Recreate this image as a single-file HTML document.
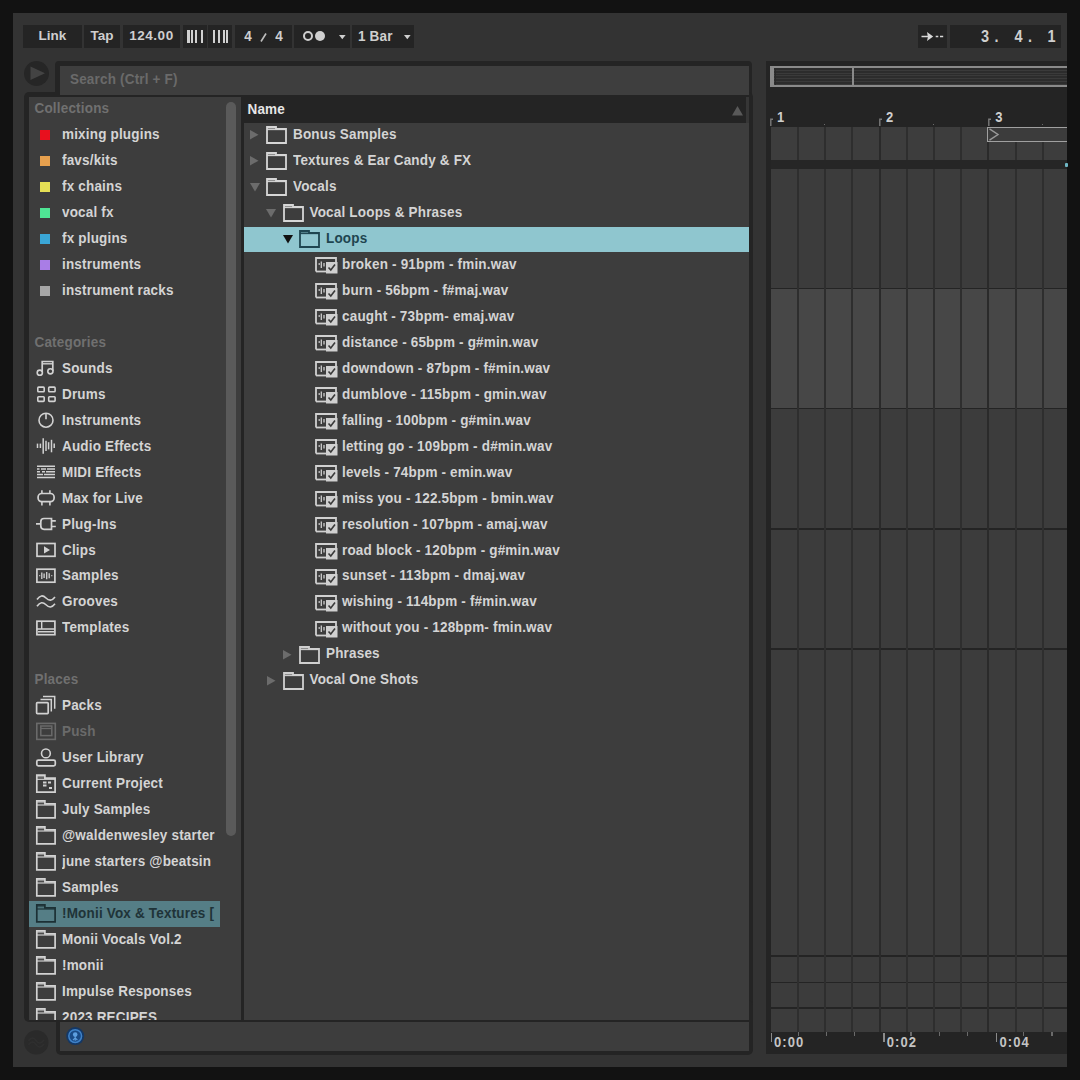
<!DOCTYPE html><html><head><meta charset="utf-8"><style>
*{margin:0;padding:0;box-sizing:border-box}
html,body{width:1080px;height:1080px;overflow:hidden;background:#121212}
body{position:relative;font-family:"Liberation Sans", sans-serif;font-weight:bold;font-size:13.5px;color:#d4d4d4}
.a{position:absolute}
.t{position:absolute;white-space:nowrap;line-height:26px;height:26px;letter-spacing:0.18px;margin-top:-0.5px;transform:scaleY(1.08);transform-origin:0 17.7px}
.btn{position:absolute;top:25px;height:23px;background:#242424;color:#cfcfcf;line-height:22px;text-align:center;font-size:13.5px}
svg{position:absolute;overflow:visible}
</style></head><body>
<div class="a" style="left:13px;top:13px;width:1054px;height:1054px;background:#333333"></div>

<div class="btn" style="left:23px;width:59px">Link</div>
<div class="btn" style="left:84px;width:36px">Tap</div>
<div class="btn" style="left:123px;width:57px"><span style="letter-spacing:0.5px">124.00</span></div>
<div class="btn" style="left:183px;width:24px"></div>
<div class="btn" style="left:208px;width:24px"></div>
<div class="btn" style="left:235px;width:57px"></div>
<div class="btn" style="left:294px;width:56px"></div>
<div class="btn" style="left:352px;width:62px"></div>
<div class="btn" style="left:918px;width:29px"></div>
<div class="btn" style="left:950px;width:111px"></div>
<div class="a" style="left:187px;top:30px;width:2.6px;height:13px;background:#d0d0d0"></div>
<div class="a" style="left:190.6px;top:30px;width:2.4px;height:13px;background:#d0d0d0"></div>
<div class="a" style="left:195.1px;top:30px;width:2px;height:13px;background:#d0d0d0"></div>
<div class="a" style="left:200.6px;top:30px;width:2.1px;height:13px;background:#d0d0d0"></div>
<div class="a" style="left:213px;top:30px;width:2.1px;height:13px;background:#d0d0d0"></div>
<div class="a" style="left:218.3px;top:30px;width:1.9px;height:13px;background:#d0d0d0"></div>
<div class="a" style="left:222.5px;top:30px;width:2px;height:13px;background:#d0d0d0"></div>
<div class="a" style="left:225.6px;top:30px;width:2.6px;height:13px;background:#d0d0d0"></div>
<div class="t" style="left:244.3px;top:24px;color:#cfcfcf">4</div>
<svg style="left:260px;top:33px" width="7" height="9"><path d="M1,8.5L6,0.5" stroke="#bdbdbd" stroke-width="1.6"/></svg>
<div class="t" style="left:275.2px;top:24px;color:#cfcfcf">4</div>
<div class="a" style="left:303px;top:31.2px;width:10.2px;height:10.2px;border:2px solid #cfcfcf;border-radius:50%"></div>
<div class="a" style="left:315.3px;top:31.2px;width:10.2px;height:10.2px;background:#d0d0d0;border-radius:50%"></div>
<svg style="left:339.4px;top:34.5px" width="7" height="5"><path d="M0,0H6.6L3.3,4.2Z" fill="#cfcfcf"/></svg>
<div class="t" style="left:358px;top:24px;line-height:26px;color:#cfcfcf">1 Bar</div>
<svg style="left:404px;top:34.5px" width="7" height="5"><path d="M0,0H6.6L3.3,4.2Z" fill="#cfcfcf"/></svg>
<svg style="left:0;top:0" width="1080" height="60"><path d="M921.5,36.5H928.5M935.7,36.5H938.3M940,36.5H943.2" stroke="#d8d8d8" stroke-width="1.6"/><path d="M927,32L933.2,36.5L927,41Q928.6,36.5 927,32Z" fill="#d8d8d8"/></svg>
<div class="t" style="left:981px;top:24px;font-size:14.5px;color:#cfcfcf">3</div>
<div class="t" style="left:994.5px;top:24px;font-size:14.5px;color:#cfcfcf">.</div>
<div class="t" style="left:1014.5px;top:24px;font-size:14.5px;color:#cfcfcf">4</div>
<div class="t" style="left:1028px;top:24px;font-size:14.5px;color:#cfcfcf">.</div>
<div class="t" style="left:1047.5px;top:24px;font-size:14.5px;color:#cfcfcf">1</div>
<div class="a" style="left:24px;top:60.5px;width:25px;height:25px;border-radius:50%;background:#262626"></div>
<svg style="left:30px;top:66px" width="16" height="15"><path d="M0.5,0.5L15,7.2L0.5,14Z" fill="#434343"/></svg>
<div class="a" style="left:55px;top:60.5px;width:697px;height:36px;background:#242424;border-radius:4px"></div>
<div class="a" style="left:24px;top:92px;width:729px;height:930px;background:#242424;border-radius:5px"></div>
<div class="a" style="left:55.5px;top:1000px;width:697.5px;height:55px;background:#242424;border-radius:5px"></div>
<div class="a" style="left:59.5px;top:65.5px;width:689.5px;height:29px;background:#3e3e3e"></div>
<div class="t" style="left:70px;top:67px;color:#6a6a6a">Search (Ctrl + F)</div>
<div class="a" style="left:28.5px;top:97px;width:212px;height:922.5px;background:#3d3d3d"></div>
<div class="a" style="left:225.5px;top:102px;width:10px;height:734px;background:#5a5a5a;border-radius:5px"></div>
<div class="a" style="left:243.5px;top:97px;width:505.5px;height:25.5px;background:#242424"></div>
<div class="a" style="left:746px;top:97px;width:3px;height:25.5px;background:#363636"></div>
<div class="a" style="left:243.5px;top:122.5px;width:505.5px;height:897px;background:#3d3d3d"></div>
<div class="a" style="left:60px;top:1022px;width:689px;height:28.5px;background:#3d3d3d"></div>
<div class="t" style="left:247.5px;top:97px;line-height:25px;color:#e6e6e6">Name</div>
<svg style="left:732px;top:105.5px" width="11" height="10"><path d="M5.5,0L11,9.5H0Z" fill="#595959"/></svg>
<div class="a" style="left:243.5px;top:226.5px;width:505.5px;height:25px;background:#8fc6cf"></div>
<svg style="left:250.0px;top:130.2px" width="9" height="10"><path d="M0,0L8.5,4.7L0,9.4Z" fill="#6c6c6c"/></svg>
<svg style="left:266.0px;top:126.0px" width="21" height="18"><rect x="1" y="1" width="9" height="2.5" fill="#d6d6d6" opacity="0.55"/><path d="M1,17V1H10V3H20V17Z" fill="none" stroke="#d6d6d6" stroke-width="1.8" stroke-linejoin="miter"/><path d="M1,3.6H20" stroke="#d6d6d6" stroke-width="1.1"/></svg>
<div class="t" style="left:293.0px;top:122.50px;color:#d4d4d4">Bonus Samples</div>
<svg style="left:250.0px;top:156.2px" width="9" height="10"><path d="M0,0L8.5,4.7L0,9.4Z" fill="#6c6c6c"/></svg>
<svg style="left:266.0px;top:152.0px" width="21" height="18"><rect x="1" y="1" width="9" height="2.5" fill="#d6d6d6" opacity="0.55"/><path d="M1,17V1H10V3H20V17Z" fill="none" stroke="#d6d6d6" stroke-width="1.8" stroke-linejoin="miter"/><path d="M1,3.6H20" stroke="#d6d6d6" stroke-width="1.1"/></svg>
<div class="t" style="left:293.0px;top:148.47px;color:#d4d4d4">Textures &amp; Ear Candy &amp; FX</div>
<svg style="left:249.5px;top:182.7px" width="10" height="9"><path d="M0,0H10L5,8.5Z" fill="#6c6c6c"/></svg>
<svg style="left:266.0px;top:178.0px" width="21" height="18"><rect x="1" y="1" width="9" height="2.5" fill="#d6d6d6" opacity="0.55"/><path d="M1,17V1H10V3H20V17Z" fill="none" stroke="#d6d6d6" stroke-width="1.8" stroke-linejoin="miter"/><path d="M1,3.6H20" stroke="#d6d6d6" stroke-width="1.1"/></svg>
<div class="t" style="left:293.0px;top:174.44px;color:#d4d4d4">Vocals</div>
<svg style="left:266.0px;top:208.7px" width="10" height="9"><path d="M0,0H10L5,8.5Z" fill="#6c6c6c"/></svg>
<svg style="left:282.5px;top:204.0px" width="21" height="18"><rect x="1" y="1" width="9" height="2.5" fill="#d6d6d6" opacity="0.55"/><path d="M1,17V1H10V3H20V17Z" fill="none" stroke="#d6d6d6" stroke-width="1.8" stroke-linejoin="miter"/><path d="M1,3.6H20" stroke="#d6d6d6" stroke-width="1.1"/></svg>
<div class="t" style="left:309.5px;top:200.41px;color:#d4d4d4">Vocal Loops &amp; Phrases</div>
<svg style="left:283.0px;top:234.7px" width="10" height="9"><path d="M0,0H10L5,8.5Z" fill="#111"/></svg>
<svg style="left:299.0px;top:230.0px" width="21" height="18"><rect x="1" y="1" width="9" height="2.5" fill="#1e4550" opacity="0.55"/><path d="M1,17V1H10V3H20V17Z" fill="none" stroke="#1e4550" stroke-width="1.8" stroke-linejoin="miter"/><path d="M1,3.6H20" stroke="#1e4550" stroke-width="1.1"/></svg>
<div class="t" style="left:326.0px;top:226.38px;color:#1e4550">Loops</div>
<svg style="left:315px;top:257.0px" width="23" height="17"><path d="M1,14.5V1H21V5" fill="none" stroke="#d0d0d0" stroke-width="1.8"/><path d="M1,14.5H11" fill="none" stroke="#d0d0d0" stroke-width="1.8"/><path d="M3.5,7H5M6.3,4.5V11M9,6V9.5" stroke="#cfcfcf" stroke-width="1.3"/><rect x="11" y="5" width="11.5" height="11.5" fill="#d0d0d0"/><path d="M13.5,10.5L15.8,13L20,7.5" fill="none" stroke="#3a3a3a" stroke-width="1.6"/></svg>
<div class="t" style="left:342px;top:252.35px">broken - 91bpm - fmin.wav</div>
<svg style="left:315px;top:283.0px" width="23" height="17"><path d="M1,14.5V1H21V5" fill="none" stroke="#d0d0d0" stroke-width="1.8"/><path d="M1,14.5H11" fill="none" stroke="#d0d0d0" stroke-width="1.8"/><path d="M3.5,7H5M6.3,4.5V11M9,6V9.5" stroke="#cfcfcf" stroke-width="1.3"/><rect x="11" y="5" width="11.5" height="11.5" fill="#d0d0d0"/><path d="M13.5,10.5L15.8,13L20,7.5" fill="none" stroke="#3a3a3a" stroke-width="1.6"/></svg>
<div class="t" style="left:342px;top:278.32px">burn - 56bpm - f#maj.wav</div>
<svg style="left:315px;top:309.0px" width="23" height="17"><path d="M1,14.5V1H21V5" fill="none" stroke="#d0d0d0" stroke-width="1.8"/><path d="M1,14.5H11" fill="none" stroke="#d0d0d0" stroke-width="1.8"/><path d="M3.5,7H5M6.3,4.5V11M9,6V9.5" stroke="#cfcfcf" stroke-width="1.3"/><rect x="11" y="5" width="11.5" height="11.5" fill="#d0d0d0"/><path d="M13.5,10.5L15.8,13L20,7.5" fill="none" stroke="#3a3a3a" stroke-width="1.6"/></svg>
<div class="t" style="left:342px;top:304.29px">caught - 73bpm- emaj.wav</div>
<svg style="left:315px;top:335.0px" width="23" height="17"><path d="M1,14.5V1H21V5" fill="none" stroke="#d0d0d0" stroke-width="1.8"/><path d="M1,14.5H11" fill="none" stroke="#d0d0d0" stroke-width="1.8"/><path d="M3.5,7H5M6.3,4.5V11M9,6V9.5" stroke="#cfcfcf" stroke-width="1.3"/><rect x="11" y="5" width="11.5" height="11.5" fill="#d0d0d0"/><path d="M13.5,10.5L15.8,13L20,7.5" fill="none" stroke="#3a3a3a" stroke-width="1.6"/></svg>
<div class="t" style="left:342px;top:330.26px">distance - 65bpm - g#min.wav</div>
<svg style="left:315px;top:361.0px" width="23" height="17"><path d="M1,14.5V1H21V5" fill="none" stroke="#d0d0d0" stroke-width="1.8"/><path d="M1,14.5H11" fill="none" stroke="#d0d0d0" stroke-width="1.8"/><path d="M3.5,7H5M6.3,4.5V11M9,6V9.5" stroke="#cfcfcf" stroke-width="1.3"/><rect x="11" y="5" width="11.5" height="11.5" fill="#d0d0d0"/><path d="M13.5,10.5L15.8,13L20,7.5" fill="none" stroke="#3a3a3a" stroke-width="1.6"/></svg>
<div class="t" style="left:342px;top:356.23px">downdown - 87bpm - f#min.wav</div>
<svg style="left:315px;top:387.0px" width="23" height="17"><path d="M1,14.5V1H21V5" fill="none" stroke="#d0d0d0" stroke-width="1.8"/><path d="M1,14.5H11" fill="none" stroke="#d0d0d0" stroke-width="1.8"/><path d="M3.5,7H5M6.3,4.5V11M9,6V9.5" stroke="#cfcfcf" stroke-width="1.3"/><rect x="11" y="5" width="11.5" height="11.5" fill="#d0d0d0"/><path d="M13.5,10.5L15.8,13L20,7.5" fill="none" stroke="#3a3a3a" stroke-width="1.6"/></svg>
<div class="t" style="left:342px;top:382.20px">dumblove - 115bpm - gmin.wav</div>
<svg style="left:315px;top:413.0px" width="23" height="17"><path d="M1,14.5V1H21V5" fill="none" stroke="#d0d0d0" stroke-width="1.8"/><path d="M1,14.5H11" fill="none" stroke="#d0d0d0" stroke-width="1.8"/><path d="M3.5,7H5M6.3,4.5V11M9,6V9.5" stroke="#cfcfcf" stroke-width="1.3"/><rect x="11" y="5" width="11.5" height="11.5" fill="#d0d0d0"/><path d="M13.5,10.5L15.8,13L20,7.5" fill="none" stroke="#3a3a3a" stroke-width="1.6"/></svg>
<div class="t" style="left:342px;top:408.17px">falling - 100bpm - g#min.wav</div>
<svg style="left:315px;top:439.0px" width="23" height="17"><path d="M1,14.5V1H21V5" fill="none" stroke="#d0d0d0" stroke-width="1.8"/><path d="M1,14.5H11" fill="none" stroke="#d0d0d0" stroke-width="1.8"/><path d="M3.5,7H5M6.3,4.5V11M9,6V9.5" stroke="#cfcfcf" stroke-width="1.3"/><rect x="11" y="5" width="11.5" height="11.5" fill="#d0d0d0"/><path d="M13.5,10.5L15.8,13L20,7.5" fill="none" stroke="#3a3a3a" stroke-width="1.6"/></svg>
<div class="t" style="left:342px;top:434.14px">letting go - 109bpm - d#min.wav</div>
<svg style="left:315px;top:465.0px" width="23" height="17"><path d="M1,14.5V1H21V5" fill="none" stroke="#d0d0d0" stroke-width="1.8"/><path d="M1,14.5H11" fill="none" stroke="#d0d0d0" stroke-width="1.8"/><path d="M3.5,7H5M6.3,4.5V11M9,6V9.5" stroke="#cfcfcf" stroke-width="1.3"/><rect x="11" y="5" width="11.5" height="11.5" fill="#d0d0d0"/><path d="M13.5,10.5L15.8,13L20,7.5" fill="none" stroke="#3a3a3a" stroke-width="1.6"/></svg>
<div class="t" style="left:342px;top:460.11px">levels - 74bpm - emin.wav</div>
<svg style="left:315px;top:491.0px" width="23" height="17"><path d="M1,14.5V1H21V5" fill="none" stroke="#d0d0d0" stroke-width="1.8"/><path d="M1,14.5H11" fill="none" stroke="#d0d0d0" stroke-width="1.8"/><path d="M3.5,7H5M6.3,4.5V11M9,6V9.5" stroke="#cfcfcf" stroke-width="1.3"/><rect x="11" y="5" width="11.5" height="11.5" fill="#d0d0d0"/><path d="M13.5,10.5L15.8,13L20,7.5" fill="none" stroke="#3a3a3a" stroke-width="1.6"/></svg>
<div class="t" style="left:342px;top:486.08px">miss you - 122.5bpm - bmin.wav</div>
<svg style="left:315px;top:517.0px" width="23" height="17"><path d="M1,14.5V1H21V5" fill="none" stroke="#d0d0d0" stroke-width="1.8"/><path d="M1,14.5H11" fill="none" stroke="#d0d0d0" stroke-width="1.8"/><path d="M3.5,7H5M6.3,4.5V11M9,6V9.5" stroke="#cfcfcf" stroke-width="1.3"/><rect x="11" y="5" width="11.5" height="11.5" fill="#d0d0d0"/><path d="M13.5,10.5L15.8,13L20,7.5" fill="none" stroke="#3a3a3a" stroke-width="1.6"/></svg>
<div class="t" style="left:342px;top:512.05px">resolution - 107bpm - amaj.wav</div>
<svg style="left:315px;top:543.0px" width="23" height="17"><path d="M1,14.5V1H21V5" fill="none" stroke="#d0d0d0" stroke-width="1.8"/><path d="M1,14.5H11" fill="none" stroke="#d0d0d0" stroke-width="1.8"/><path d="M3.5,7H5M6.3,4.5V11M9,6V9.5" stroke="#cfcfcf" stroke-width="1.3"/><rect x="11" y="5" width="11.5" height="11.5" fill="#d0d0d0"/><path d="M13.5,10.5L15.8,13L20,7.5" fill="none" stroke="#3a3a3a" stroke-width="1.6"/></svg>
<div class="t" style="left:342px;top:538.02px">road block - 120bpm - g#min.wav</div>
<svg style="left:315px;top:569.0px" width="23" height="17"><path d="M1,14.5V1H21V5" fill="none" stroke="#d0d0d0" stroke-width="1.8"/><path d="M1,14.5H11" fill="none" stroke="#d0d0d0" stroke-width="1.8"/><path d="M3.5,7H5M6.3,4.5V11M9,6V9.5" stroke="#cfcfcf" stroke-width="1.3"/><rect x="11" y="5" width="11.5" height="11.5" fill="#d0d0d0"/><path d="M13.5,10.5L15.8,13L20,7.5" fill="none" stroke="#3a3a3a" stroke-width="1.6"/></svg>
<div class="t" style="left:342px;top:563.99px">sunset - 113bpm - dmaj.wav</div>
<svg style="left:315px;top:595.0px" width="23" height="17"><path d="M1,14.5V1H21V5" fill="none" stroke="#d0d0d0" stroke-width="1.8"/><path d="M1,14.5H11" fill="none" stroke="#d0d0d0" stroke-width="1.8"/><path d="M3.5,7H5M6.3,4.5V11M9,6V9.5" stroke="#cfcfcf" stroke-width="1.3"/><rect x="11" y="5" width="11.5" height="11.5" fill="#d0d0d0"/><path d="M13.5,10.5L15.8,13L20,7.5" fill="none" stroke="#3a3a3a" stroke-width="1.6"/></svg>
<div class="t" style="left:342px;top:589.96px">wishing - 114bpm - f#min.wav</div>
<svg style="left:315px;top:621.0px" width="23" height="17"><path d="M1,14.5V1H21V5" fill="none" stroke="#d0d0d0" stroke-width="1.8"/><path d="M1,14.5H11" fill="none" stroke="#d0d0d0" stroke-width="1.8"/><path d="M3.5,7H5M6.3,4.5V11M9,6V9.5" stroke="#cfcfcf" stroke-width="1.3"/><rect x="11" y="5" width="11.5" height="11.5" fill="#d0d0d0"/><path d="M13.5,10.5L15.8,13L20,7.5" fill="none" stroke="#3a3a3a" stroke-width="1.6"/></svg>
<div class="t" style="left:342px;top:615.93px">without you - 128bpm- fmin.wav</div>
<svg style="left:283.0px;top:650.2px" width="9" height="10"><path d="M0,0L8.5,4.7L0,9.4Z" fill="#6c6c6c"/></svg>
<svg style="left:299.0px;top:646.0px" width="21" height="18"><rect x="1" y="1" width="9" height="2.5" fill="#d0d0d0" opacity="0.55"/><path d="M1,17V1H10V3H20V17Z" fill="none" stroke="#d0d0d0" stroke-width="1.8" stroke-linejoin="miter"/><path d="M1,3.6H20" stroke="#d0d0d0" stroke-width="1.1"/></svg>
<div class="t" style="left:326.0px;top:641.90px">Phrases</div>
<svg style="left:266.5px;top:676.2px" width="9" height="10"><path d="M0,0L8.5,4.7L0,9.4Z" fill="#6c6c6c"/></svg>
<svg style="left:282.5px;top:672.0px" width="21" height="18"><rect x="1" y="1" width="9" height="2.5" fill="#d0d0d0" opacity="0.55"/><path d="M1,17V1H10V3H20V17Z" fill="none" stroke="#d0d0d0" stroke-width="1.8" stroke-linejoin="miter"/><path d="M1,3.6H20" stroke="#d0d0d0" stroke-width="1.1"/></svg>
<div class="t" style="left:309.5px;top:667.87px">Vocal One Shots</div>
<div class="a" style="left:0;top:0;width:1080px;height:1019.5px;overflow:hidden">
<div class="t" style="left:34.5px;top:96.53px;color:#707070">Collections</div>
<div class="a" style="left:40px;top:130.0px;width:10px;height:10px;background:#e8101e"></div>
<div class="t" style="left:62px;top:122.50px">mixing plugins</div>
<div class="a" style="left:40px;top:156.0px;width:10px;height:10px;background:#e6a04e"></div>
<div class="t" style="left:62px;top:148.47px">favs/kits</div>
<div class="a" style="left:40px;top:182.0px;width:10px;height:10px;background:#e6e055"></div>
<div class="t" style="left:62px;top:174.44px">fx chains</div>
<div class="a" style="left:40px;top:208.0px;width:10px;height:10px;background:#4fe694"></div>
<div class="t" style="left:62px;top:200.41px">vocal fx</div>
<div class="a" style="left:40px;top:234.0px;width:10px;height:10px;background:#3aa6d6"></div>
<div class="t" style="left:62px;top:226.38px">fx plugins</div>
<div class="a" style="left:40px;top:260.0px;width:10px;height:10px;background:#a97de6"></div>
<div class="t" style="left:62px;top:252.35px">instruments</div>
<div class="a" style="left:40px;top:286.0px;width:10px;height:10px;background:#a6a6a6"></div>
<div class="t" style="left:62px;top:278.32px">instrument racks</div>
<div class="t" style="left:34.5px;top:330.26px;color:#707070">Categories</div>
<div class="t" style="left:62px;top:356.23px">Sounds</div>
<div class="t" style="left:62px;top:382.20px">Drums</div>
<div class="t" style="left:62px;top:408.17px">Instruments</div>
<div class="t" style="left:62px;top:434.14px">Audio Effects</div>
<div class="t" style="left:62px;top:460.11px">MIDI Effects</div>
<div class="t" style="left:62px;top:486.08px">Max for Live</div>
<div class="t" style="left:62px;top:512.05px">Plug-Ins</div>
<div class="t" style="left:62px;top:538.02px">Clips</div>
<div class="t" style="left:62px;top:563.99px">Samples</div>
<div class="t" style="left:62px;top:589.96px">Grooves</div>
<div class="t" style="left:62px;top:615.93px">Templates</div>
<div class="t" style="left:34.5px;top:667.87px;color:#707070">Places</div>
<div class="a" style="left:29px;top:901px;width:191px;height:25.5px;background:#557e86"></div>
<div class="t" style="left:62px;top:693.84px;color:#d4d4d4;max-width:152.5px;overflow:hidden">Packs</div>
<div class="t" style="left:62px;top:719.81px;color:#6a6a6a;max-width:152.5px;overflow:hidden">Push</div>
<div class="t" style="left:62px;top:745.78px;color:#d4d4d4;max-width:152.5px;overflow:hidden">User Library</div>
<div class="t" style="left:62px;top:771.75px;color:#d4d4d4;max-width:152.5px;overflow:hidden">Current Project</div>
<div class="t" style="left:62px;top:797.72px;color:#d4d4d4;max-width:152.5px;overflow:hidden">July Samples</div>
<div class="t" style="left:62px;top:823.69px;color:#d4d4d4;max-width:152.5px;overflow:hidden">@waldenwesley starters</div>
<div class="t" style="left:62px;top:849.66px;color:#d4d4d4;max-width:152.5px;overflow:hidden">june starters @beatsin</div>
<div class="t" style="left:62px;top:875.63px;color:#d4d4d4;max-width:152.5px;overflow:hidden">Samples</div>
<div class="t" style="left:62px;top:901.60px;color:#1f3338;max-width:152.5px;overflow:hidden">!Monii Vox &amp; Textures [!</div>
<div class="t" style="left:62px;top:927.57px;color:#d4d4d4;max-width:152.5px;overflow:hidden">Monii Vocals Vol.2</div>
<div class="t" style="left:62px;top:953.54px;color:#d4d4d4;max-width:152.5px;overflow:hidden">!monii</div>
<div class="t" style="left:62px;top:979.51px;color:#d4d4d4;max-width:152.5px;overflow:hidden">Impulse Responses</div>
<div class="t" style="left:62px;top:1005.48px;color:#d4d4d4;max-width:152.5px;overflow:hidden">2023 RECIPES</div>
<svg style="left:0;top:0;pointer-events:none" width="1080" height="1080"><path d="M42.2,372V361.5H52.8V371" fill="none" stroke="#d2d2d2" stroke-width="1.7"/><path d="M42.2,363.8H52.8" stroke="#d2d2d2" stroke-width="1.4"/><circle cx="39.8" cy="372.7" r="2.6" fill="none" stroke="#d2d2d2" stroke-width="1.6"/><circle cx="50.4" cy="371.3" r="2.6" fill="none" stroke="#d2d2d2" stroke-width="1.6"/><rect x="37.8" y="387.1" width="6.4" height="4.6" rx="0.8" fill="none" stroke="#d2d2d2" stroke-width="1.6"/><rect x="48.7" y="387.1" width="6.4" height="4.6" rx="0.8" fill="none" stroke="#d2d2d2" stroke-width="1.6"/><rect x="37.8" y="396.8" width="6.4" height="4.6" rx="0.8" fill="none" stroke="#d2d2d2" stroke-width="1.6"/><rect x="48.7" y="396.8" width="6.4" height="4.6" rx="0.8" fill="none" stroke="#d2d2d2" stroke-width="1.6"/><circle cx="46" cy="420.2" r="7" fill="none" stroke="#d2d2d2" stroke-width="1.6"/><path d="M46,413.2V419.3" stroke="#d2d2d2" stroke-width="1.6"/><path d="M37.5,443.6V448" stroke="#d2d2d2" stroke-width="1.5"/><path d="M40.4,443.6V448" stroke="#d2d2d2" stroke-width="1.5"/><path d="M43.2,438.3V453.7" stroke="#d2d2d2" stroke-width="1.5"/><path d="M46,440.7V450.9" stroke="#d2d2d2" stroke-width="1.5"/><path d="M48.6,442.2V449.4" stroke="#d2d2d2" stroke-width="1.5"/><path d="M51.5,439.8V452.3" stroke="#d2d2d2" stroke-width="1.5"/><path d="M54.2,443.6V448" stroke="#d2d2d2" stroke-width="1.5"/><path d="M37,466.3H55M37,477.6H55M37,469.1H39.5M41,469.1H46M47,469.1H55M37,471.8H40M42,471.8H45M46,471.8H55M37,474.5H43M44,474.5H55" stroke="#d2d2d2" stroke-width="1.5"/><rect x="38.1" y="493.5" width="16" height="8.2" rx="3.6" fill="none" stroke="#d2d2d2" stroke-width="1.7"/><path d="M41.9,490.3V493.5M49.9,490.3V493.5M41.9,501.7V505.5M49.9,501.7V505.5" stroke="#d2d2d2" stroke-width="1.6"/><path d="M51.5,518.5H44Q40.8,518.5 40.8,521.7V526.1Q40.8,529.3 44,529.3H51.5Z" fill="none" stroke="#d2d2d2" stroke-width="1.7"/><path d="M36,523.9H40.8M51.5,520.9H55.8M51.5,526.5H55.8" stroke="#d2d2d2" stroke-width="1.6"/><rect x="37" y="543.5" width="18" height="12.8" fill="none" stroke="#d2d2d2" stroke-width="1.7"/><path d="M44,546.2L50,549.9L44,553.6Z" fill="#d2d2d2"/><rect x="36.9" y="569.2" width="18" height="13" fill="none" stroke="#d2d2d2" stroke-width="1.7"/><path d="M39.2,575.7H40.2M51.3,575.7H52.3M41.8,572.5V579M44.1,573.5V578M46.7,572V579.3M49.2,573.2V578.2" stroke="#d2d2d2" stroke-width="1.3"/><path d="M37,599.5C40,595 43,595 46,598S52,601 55,597M37,606.3C40,601.8 43,601.8 46,604.8S52,607.8 55,603.8" fill="none" stroke="#d2d2d2" stroke-width="1.6"/><rect x="36.9" y="621.2" width="18" height="13.5" fill="none" stroke="#d2d2d2" stroke-width="1.7"/><path d="M36.9,629H54.9M41.7,621.2V629M38,631.8H54" stroke="#d2d2d2" stroke-width="1.4"/><rect x="36.6" y="702.7" width="11.6" height="10.9" rx="0.8" fill="none" stroke="#d2d2d2" stroke-width="1.7"/><path d="M40.5,699.4H51.3V711.5M43,696.5H54.7V708.8" fill="none" stroke="#d2d2d2" stroke-width="1.5"/><rect x="36.8" y="723.4" width="18.5" height="16" fill="none" stroke="#6a6a6a" stroke-width="1.6"/><rect x="40.8" y="726" width="11" height="9.6" fill="none" stroke="#6a6a6a" stroke-width="1.5"/><path d="M40.8,728.5H51.8" stroke="#6a6a6a" stroke-width="1.3"/><circle cx="45.9" cy="753.4" r="4.4" fill="none" stroke="#d2d2d2" stroke-width="1.6"/><rect x="36.8" y="760.2" width="18.5" height="5.6" rx="1.5" fill="none" stroke="#d2d2d2" stroke-width="1.7"/><path d="M36.8,792.2V775.2H44.9V778.2H55.1V792.2Z" fill="none" stroke="#d2d2d2" stroke-width="1.7"/><path d="M36.8,776.4000000000001H44.9" stroke="#d2d2d2" stroke-width="2.2" opacity="0.55"/><path d="M36.8,779.3000000000001H55.1" stroke="#d2d2d2" stroke-width="1.2"/><path d="M43,782.5H46.5M43,785.5H46.5M48,782.5H51M49,788H52" stroke="#d2d2d2" stroke-width="1.8"/><path d="M36.8,817.9000000000001V800.9000000000001H44.9V803.9000000000001H55.1V817.9000000000001Z" fill="none" stroke="#d2d2d2" stroke-width="1.7"/><path d="M36.8,802.1000000000001H44.9" stroke="#d2d2d2" stroke-width="2.2" opacity="0.55"/><path d="M36.8,805.0000000000001H55.1" stroke="#d2d2d2" stroke-width="1.2"/><path d="M36.8,843.9000000000001V826.9000000000001H44.9V829.9000000000001H55.1V843.9000000000001Z" fill="none" stroke="#d2d2d2" stroke-width="1.7"/><path d="M36.8,828.1000000000001H44.9" stroke="#d2d2d2" stroke-width="2.2" opacity="0.55"/><path d="M36.8,831.0000000000001H55.1" stroke="#d2d2d2" stroke-width="1.2"/><path d="M36.8,869.9000000000001V852.9000000000001H44.9V855.9000000000001H55.1V869.9000000000001Z" fill="none" stroke="#d2d2d2" stroke-width="1.7"/><path d="M36.8,854.1000000000001H44.9" stroke="#d2d2d2" stroke-width="2.2" opacity="0.55"/><path d="M36.8,857.0000000000001H55.1" stroke="#d2d2d2" stroke-width="1.2"/><path d="M36.8,895.9000000000001V878.9000000000001H44.9V881.9000000000001H55.1V895.9000000000001Z" fill="none" stroke="#d2d2d2" stroke-width="1.7"/><path d="M36.8,880.1000000000001H44.9" stroke="#d2d2d2" stroke-width="2.2" opacity="0.55"/><path d="M36.8,883.0000000000001H55.1" stroke="#d2d2d2" stroke-width="1.2"/><path d="M36.8,921.9000000000001V904.9000000000001H44.9V907.9000000000001H55.1V921.9000000000001Z" fill="none" stroke="#1c3035" stroke-width="1.7"/><path d="M36.8,906.1000000000001H44.9" stroke="#1c3035" stroke-width="2.2" opacity="0.55"/><path d="M36.8,909.0000000000001H55.1" stroke="#1c3035" stroke-width="1.2"/><path d="M36.8,947.9000000000001V930.9000000000001H44.9V933.9000000000001H55.1V947.9000000000001Z" fill="none" stroke="#d2d2d2" stroke-width="1.7"/><path d="M36.8,932.1000000000001H44.9" stroke="#d2d2d2" stroke-width="2.2" opacity="0.55"/><path d="M36.8,935.0000000000001H55.1" stroke="#d2d2d2" stroke-width="1.2"/><path d="M36.8,973.9000000000001V956.9000000000001H44.9V959.9000000000001H55.1V973.9000000000001Z" fill="none" stroke="#d2d2d2" stroke-width="1.7"/><path d="M36.8,958.1000000000001H44.9" stroke="#d2d2d2" stroke-width="2.2" opacity="0.55"/><path d="M36.8,961.0000000000001H55.1" stroke="#d2d2d2" stroke-width="1.2"/><path d="M36.8,999.9000000000001V982.9000000000001H44.9V985.9000000000001H55.1V999.9000000000001Z" fill="none" stroke="#d2d2d2" stroke-width="1.7"/><path d="M36.8,984.1000000000001H44.9" stroke="#d2d2d2" stroke-width="2.2" opacity="0.55"/><path d="M36.8,987.0000000000001H55.1" stroke="#d2d2d2" stroke-width="1.2"/><path d="M36.8,1025.9V1008.9000000000001H44.9V1011.9000000000001H55.1V1025.9Z" fill="none" stroke="#d2d2d2" stroke-width="1.7"/><path d="M36.8,1010.1000000000001H44.9" stroke="#d2d2d2" stroke-width="2.2" opacity="0.55"/><path d="M36.8,1013.0000000000001H55.1" stroke="#d2d2d2" stroke-width="1.2"/></svg>
</div>
<svg style="left:0;top:0" width="1080" height="1080"><circle cx="75.2" cy="1036.1" r="9" fill="#143866"/><circle cx="75.2" cy="1036.1" r="6.4" fill="#1a4a86" stroke="#3f82c8" stroke-width="1.5"/><circle cx="75.2" cy="1034.6" r="2.3" fill="#5e9fe0"/><path d="M75.2,1035.5V1040.8M73,1040.2L75.2,1037.8L77.4,1040.2" fill="none" stroke="#5e9fe0" stroke-width="1.1"/><circle cx="36.3" cy="1042.4" r="12.2" fill="#2a2a2a"/><path d="M28.5,1041C31,1037 33.5,1037 36,1040.5S41,1044 44,1040M28.5,1045C31,1041 33.5,1041 36,1044.5S41,1048 44,1044" fill="none" stroke="#2f2f2f" stroke-width="1.5"/></svg>
<div class="a" style="left:766px;top:61px;width:301px;height:993px;background:#242424"></div>
<div class="a" style="left:770px;top:66px;width:297px;height:21.3px;border:2.6px solid #8a8a8a;border-left-width:4.6px;border-right:none;background:repeating-linear-gradient(#2c2c2c 0,#2c2c2c 1.8px,#3a3a3a 1.8px,#3a3a3a 2.8px)"></div>
<div class="a" style="left:774.6px;top:68.6px;width:1px;height:16px;background:#2a2a2a"></div>
<div class="a" style="left:851.6px;top:66px;width:2.8px;height:21.3px;background:#8a8a8a"></div>
<div class="a" style="left:771px;top:127px;width:296px;height:32.5px;background:#3d3d3d"></div>
<div class="a" style="left:771px;top:168.5px;width:296px;height:119.0px;background:#3c3c3c"></div>
<div class="a" style="left:771px;top:289px;width:296px;height:118.5px;background:#474747"></div>
<div class="a" style="left:771px;top:409px;width:296px;height:119px;background:#3c3c3c"></div>
<div class="a" style="left:771px;top:529.5px;width:296px;height:118.5px;background:#3c3c3c"></div>
<div class="a" style="left:771px;top:649.5px;width:296px;height:305.5px;background:#3c3c3c"></div>
<div class="a" style="left:771px;top:956.5px;width:296px;height:25.0px;background:#3c3c3c"></div>
<div class="a" style="left:771px;top:983px;width:296px;height:24px;background:#3c3c3c"></div>
<div class="a" style="left:771px;top:1008.5px;width:296px;height:23.0px;background:#3c3c3c"></div>
<div class="a" style="left:796.90px;top:127px;width:2px;height:904.5px;background:#2e2e2e"></div>
<div class="a" style="left:824.10px;top:127px;width:2px;height:904.5px;background:#2e2e2e"></div>
<div class="a" style="left:851.30px;top:127px;width:2px;height:904.5px;background:#2e2e2e"></div>
<div class="a" style="left:878.50px;top:127px;width:2px;height:904.5px;background:#2a2a2a"></div>
<div class="a" style="left:905.70px;top:127px;width:2px;height:904.5px;background:#2e2e2e"></div>
<div class="a" style="left:932.90px;top:127px;width:2px;height:904.5px;background:#2e2e2e"></div>
<div class="a" style="left:960.10px;top:127px;width:2px;height:904.5px;background:#2e2e2e"></div>
<div class="a" style="left:987.30px;top:127px;width:2px;height:904.5px;background:#2a2a2a"></div>
<div class="a" style="left:1014.50px;top:127px;width:2px;height:904.5px;background:#2e2e2e"></div>
<div class="a" style="left:1041.70px;top:127px;width:2px;height:904.5px;background:#2e2e2e"></div>
<div class="a" style="left:771px;top:159.5px;width:296px;height:9px;background:#262626"></div>
<div class="a" style="left:1064.5px;top:163px;width:3px;height:4px;border-radius:1px;background:#6fb7c4"></div>
<div class="t" style="left:777.0px;top:108px;line-height:20px;font-size:13px;color:#cfcfcf">1</div>
<svg style="left:770.0px;top:117.5px" width="4" height="8"><path d="M0.8,8V1.2H3" fill="none" stroke="#7a7a7a" stroke-width="1.4"/></svg>
<div class="a" style="left:823.56px;top:123.5px;width:1.5px;height:1.5px;background:#6a6a6a"></div>
<div class="t" style="left:886.12px;top:108px;line-height:20px;font-size:13px;color:#cfcfcf">2</div>
<svg style="left:879.12px;top:117.5px" width="4" height="8"><path d="M0.8,8V1.2H3" fill="none" stroke="#7a7a7a" stroke-width="1.4"/></svg>
<div class="a" style="left:932.6800000000001px;top:123.5px;width:1.5px;height:1.5px;background:#6a6a6a"></div>
<div class="t" style="left:995.24px;top:108px;line-height:20px;font-size:13px;color:#cfcfcf">3</div>
<svg style="left:988.24px;top:117.5px" width="4" height="8"><path d="M0.8,8V1.2H3" fill="none" stroke="#7a7a7a" stroke-width="1.4"/></svg>
<div class="a" style="left:1041.8px;top:123.5px;width:1.5px;height:1.5px;background:#6a6a6a"></div>
<div class="a" style="left:987.3px;top:127.3px;width:79.7px;height:14.7px;border:1.6px solid #a0a0a0;border-right:none;background:#3c3c3c"></div>
<svg style="left:988.5px;top:128px" width="12" height="13"><path d="M0.5,0.8L9,6.5L0.5,12.2" fill="none" stroke="#9a9a9a" stroke-width="1.4"/></svg>
<div class="t" style="left:774.0px;top:1032px;line-height:22px;font-size:13px;letter-spacing:1.1px;color:#c4c4c4">0:00</div>
<div class="a" style="left:770.5px;top:1033px;width:1.3px;height:9px;background:#8a8a8a"></div>
<div class="t" style="left:886.7573333333333px;top:1032px;line-height:22px;font-size:13px;letter-spacing:1.1px;color:#c4c4c4">0:02</div>
<div class="a" style="left:883.2573333333333px;top:1033px;width:1.3px;height:9px;background:#8a8a8a"></div>
<div class="t" style="left:999.5146666666667px;top:1032px;line-height:22px;font-size:13px;letter-spacing:1.1px;color:#c4c4c4">0:04</div>
<div class="a" style="left:996.0146666666667px;top:1033px;width:1.3px;height:9px;background:#8a8a8a"></div>
<div class="a" style="left:797.6893333333334px;top:1032px;width:1.2px;height:3.5px;background:#6a6a6a"></div>
<div class="a" style="left:825.8786666666667px;top:1032px;width:1.2px;height:3.5px;background:#6a6a6a"></div>
<div class="a" style="left:854.068px;top:1032px;width:1.2px;height:3.5px;background:#6a6a6a"></div>
<div class="a" style="left:910.4466666666667px;top:1032px;width:1.2px;height:3.5px;background:#6a6a6a"></div>
<div class="a" style="left:938.636px;top:1032px;width:1.2px;height:3.5px;background:#6a6a6a"></div>
<div class="a" style="left:966.8253333333333px;top:1032px;width:1.2px;height:3.5px;background:#6a6a6a"></div>
<div class="a" style="left:1023.2040000000001px;top:1032px;width:1.2px;height:3.5px;background:#6a6a6a"></div>
<div class="a" style="left:1051.3933333333334px;top:1032px;width:1.2px;height:3.5px;background:#6a6a6a"></div>
</body></html>
